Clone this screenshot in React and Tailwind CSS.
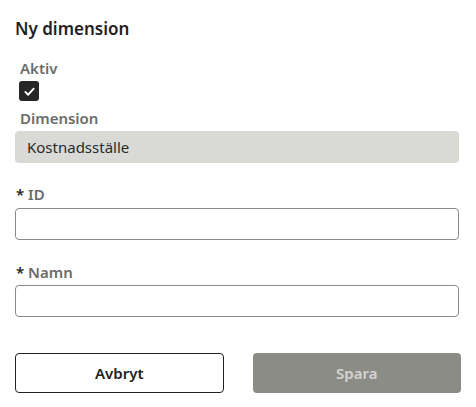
import React from 'react';

function App() {
  const [active, setActive] = React.useState(true);

  return (
    <div className="w-[476px] h-[407px] bg-white px-[15px] pt-[17px] font-['Noto_Sans',sans-serif] text-[#222]">
      <h2 className="text-[17px] font-semibold leading-[24px] text-[#1f1f1f]">Ny dimension</h2>

      <div className="mt-[16px] pl-[5px] text-[15px] font-semibold leading-[22px] text-[#6b6b6b]">Aktiv</div>
      <button
        className="ml-[4px] mt-[2px] flex h-[20px] w-[20px] items-center justify-center rounded-[3px] bg-[#262626]"
        onClick={() => setActive(!active)}
      >
        {active && (
          <svg width="13" height="13" viewBox="0 0 14 14" fill="none">
            <path d="M2.5 7.5l3 3 6-6.5" stroke="white" strokeWidth="2" strokeLinecap="round" strokeLinejoin="round" />
          </svg>
        )}
      </button>

      <div className="mt-[6px] pl-[5px] text-[15px] font-semibold leading-[22px] text-[#6b6b6b]">Dimension</div>
      <div className="mt-[2px] flex h-[32px] w-[444px] items-center rounded-[4px] bg-[#d9d9d6] px-[12px] text-[15px] text-[#2a2a2a]">
        Kostnadsställe
      </div>

      <div className="mt-[20px] pl-[1px] text-[15px] font-semibold leading-[22px] text-[#6b6b6b]">
        <span className="text-[#222]">*</span> ID
      </div>
      <input className="mt-[3px] block h-[32px] w-[444px] rounded-[4px] border border-[#8a8a8a] px-[10px] text-[15px] outline-none" />

      <div className="mt-[21px] pl-[1px] text-[15px] font-semibold leading-[22px] text-[#6b6b6b]">
        <span className="text-[#222]">*</span> Namn
      </div>
      <input className="mt-[2px] block h-[32px] w-[444px] rounded-[4px] border border-[#8a8a8a] px-[10px] text-[15px] outline-none" />

      <div className="mt-[36px] flex gap-[29px]">
        <button className="h-[40px] w-[209px] rounded-[4px] border border-[#222] bg-white text-[15px] font-semibold text-[#222]">Avbryt</button>
        <button disabled className="h-[40px] w-[209px] rounded-[4px] bg-[#8c8c87] text-[15px] font-semibold text-[#d4d4d0]">Spara</button>
      </div>
    </div>
  );
}

export default App;
